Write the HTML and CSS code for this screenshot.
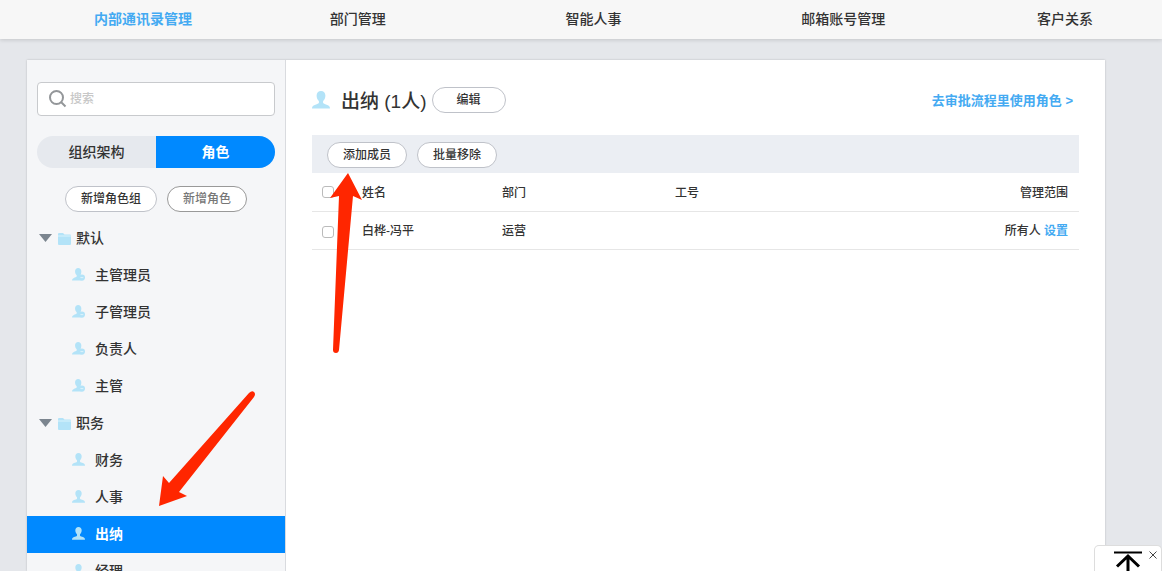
FILE: index.html
```
<!DOCTYPE html>
<html lang="zh-CN">
<head>
    <meta charset="UTF-8">
    <meta name="viewport" content="width=device-width, initial-scale=1">
    <title>内部通讯录管理</title>
    <link rel="stylesheet" href="styles.css">
</head>
<body>
    <!-- Shared icons -->
    <svg class="sprite" aria-hidden="true">
        <symbol id="user" viewBox="0 0 18 18">
            <path d="M9 0C6.300 0 4.600 1.900 4.600 4.600C4.600 7 5.500 9 6.900 10V12C6.200 12.900 4.500 13.300 2.800 13.900C1 14.600 0 15.500 0 17.500H18C18 15.500 17 14.600 15.200 13.900C13.500 13.300 11.800 12.900 11.100 12V10C12.500 9 13.400 7 13.400 4.600C13.400 1.900 11.700 0 9 0Z"/>
        </symbol>
        <symbol id="admin" viewBox="0 0 18 18">
            <path d="M8.500 0C6 0 4.200 1.800 4.200 4.500C4.200 7 5.200 9 6.500 10V11.800C5.500 12.800 4.200 13 2.600 13.800C1 14.500 0 15.500 0 17.300H12V9.400C12.600 8.300 12.900 6.500 12.900 4.500C12.900 1.800 11 0 8.500 0Z"/>
            <circle cx="13.700" cy="13.300" r="4.300"/>
            <path d="M11.700 13.300H15.700" stroke="#e3f4fb" stroke-width="1.200"/>
        </symbol>
        <symbol id="folder" viewBox="0 0 13 12">
            <path d="M0 1Q0 0 1 0H5L6.500 1.500H12Q13 1.500 13 2.500V11Q13 12 12 12H1Q0 12 0 11Z"/>
            <path d="M0 3H13" stroke="#d9f3fc" stroke-width="1"/>
        </symbol>
    </svg>

    <nav class="topnav">
        <a class="active" href="#">内部通讯录管理</a>
        <a href="#">部门管理</a>
        <a href="#">智能人事</a>
        <a href="#">邮箱账号管理</a>
        <a href="#">客户关系</a>
    </nav>

    <div class="panel">
        <aside class="sidebar">
            <label class="search">
                <svg viewBox="0 0 18 18" aria-hidden="true"><circle cx="7.500" cy="7.500" r="6.500"/><path d="M12 12L16.500 16.500"/></svg>
                <input type="text" placeholder="搜索" aria-label="搜索">
            </label>
            <div class="tabs">
                <button type="button">组织架构</button>
                <button type="button" class="active">角色</button>
            </div>
            <div class="role-actions">
                <button type="button" class="btn">新增角色组</button>
                <button type="button" class="btn btn-muted">新增角色</button>
            </div>

            <!-- Role tree -->
            <ul class="tree">
                <li class="group"><svg class="caret" viewBox="0 0 13 8"><path d="M0 0H13L6.500 8Z"/></svg><svg class="folder"><use href="#folder"/></svg>默认</li>
                <li><a href="#"><svg><use href="#admin"/></svg>主管理员</a></li>
                <li><a href="#"><svg><use href="#admin"/></svg>子管理员</a></li>
                <li><a href="#"><svg><use href="#admin"/></svg>负责人</a></li>
                <li><a href="#"><svg><use href="#admin"/></svg>主管</a></li>
                <li class="group"><svg class="caret" viewBox="0 0 13 8"><path d="M0 0H13L6.500 8Z"/></svg><svg class="folder"><use href="#folder"/></svg>职务</li>
                <li><a href="#"><svg><use href="#user"/></svg>财务</a></li>
                <li><a href="#"><svg><use href="#user"/></svg>人事</a></li>
                <li><a class="active" href="#"><svg><use href="#user"/></svg>出纳</a></li>
                <li><a href="#"><svg><use href="#user"/></svg>经理</a></li>
            </ul>
        </aside>

        <main class="content">
            <header class="title-row">
                <svg><use href="#user"/></svg>
                <h1>出纳 (1人)</h1>
                <button type="button" class="btn btn-edit">编辑</button>
                <a href="#">去审批流程里使用角色 &gt;</a>
            </header>
            <div class="toolbar">
                <button type="button" class="btn">添加成员</button>
                <button type="button" class="btn">批量移除</button>
            </div>
            <table class="members">
                <thead>
                    <tr>
                        <th class="check"><input type="checkbox" aria-label="全选"></th>
                        <th class="name">姓名</th>
                        <th class="dept">部门</th>
                        <th>工号</th>
                        <th class="scope">管理范围</th>
                    </tr>
                </thead>
                <tbody>
                    <tr>
                        <td class="check"><input type="checkbox" aria-label="白桦-冯平"></td>
                        <td>白桦-冯平</td>
                        <td>运营</td>
                        <td></td>
                        <td class="scope">所有人 <a href="#">设置</a></td>
                    </tr>
                </tbody>
            </table>
        </main>
    </div>

    <!-- Red pointer arrows -->
    <svg class="arrow arrow-add" viewBox="0 0 32 181" aria-hidden="true">
        <path d="M18 0L32 27L23 23L9 177Q8.500 180 6 180Q3 180 3 177L9 23L0 25Z"/>
    </svg>
    <svg class="arrow arrow-role" viewBox="0 0 98 116" aria-hidden="true">
        <path d="M0 115L4 85L10 92L90 2Q93 -1 95 1Q97 3 95 6L20 101L28 105Z"/>
    </svg>

    <!-- Back to top -->
    <div class="backtop">
        <button type="button" class="go-top" aria-label="返回顶部">
            <svg viewBox="0 0 28 24"><path d="M0 1.500H28"/><path class="head" d="M14 24V5M3 15.500L14 5L25 15.500"/></svg>
        </button>
        <button type="button" class="close" aria-label="关闭">
            <svg viewBox="0 0 8 8"><path d="M0.500 0.500L7.500 7.500M7.500 0.500L0.500 7.500"/></svg>
        </button>
    </div>
</body>
</html>
```
FILE: styles.css
```
* {
    box-sizing: border-box;
}
body {
    margin: 0;
    height: 100vh;
    display: flex;
    flex-direction: column;
    overflow: hidden;
    font-family: "Liberation Sans", "Noto Sans CJK SC", sans-serif;
    font-size: 12px;
    font-weight: 500;
    color: #333;
    background-color: #e5e7eb;
}
button, input {
    font: inherit;
    color: inherit;
}
button {
    padding: 0;
    border: none;
    background: none;
    cursor: pointer;
}
a {
    color: #44aaf2;
    text-decoration: none;
}
.sprite {
    display: none;
}

/* Top navigation */
.topnav {
    display: grid;
    grid-template-columns: repeat(4, 1fr) 125px;
    flex: none;
    padding-left: 94px;
    line-height: 39px;
    font-size: 14px;
    background-color: #f7f7f7;
    box-shadow: 0 1px 4px rgba(0,0,0,0.15);
}
.topnav a {
    color: #333;
}
.topnav .active {
    color: #44aaf2;
    font-weight: bold;
}

.panel {
    display: flex;
    flex: 1;
    min-height: 0;
    margin: 21px 57px 0 27px;
    background-color: #fff;
    box-shadow: 0 0 2px rgba(0,0,0,0.2);
}

/* Sidebar */
.sidebar {
    flex: none;
    width: 259px;
    padding-top: 22px;
    overflow: hidden;
    background-color: #f5f6f8;
    border-right: 1px solid #d9dbdf;
}
.search {
    display: flex;
    align-items: center;
    gap: 3px;
    height: 34px;
    margin: 0 10px;
    padding: 0 11px;
    background-color: #fff;
    border: 1px solid #c8cacd;
    border-radius: 4px;
}
.search svg {
    flex: none;
    width: 18px;
    height: 18px;
    fill: none;
    stroke: #939699;
    stroke-width: 2;
}
.search input {
    flex: 1;
    min-width: 0;
    padding: 0;
    border: none;
    outline: none;
}
.search input::placeholder {
    color: #c8c8c8;
}
.tabs {
    display: flex;
    height: 32px;
    margin: 20px 10px 18px;
    border-radius: 16px;
    overflow: hidden;
    background-color: #e6e9ee;
}
.tabs button {
    flex: 1;
    padding-bottom: 2px;
    font-size: 14px;
}
.tabs .active {
    color: #fff;
    font-weight: bold;
    background-color: #0089ff;
}
.role-actions {
    display: flex;
    justify-content: center;
    gap: 10px;
    margin-bottom: 8px;
}
.btn {
    height: 26px;
    padding: 0 15px;
    line-height: 24px;
    background-color: #fff;
    border: 1px solid #bfc2c9;
    border-radius: 13px;
}
.btn-muted {
    color: #777;
    border-color: #999;
}

.tree {
    margin: 0;
    padding: 0;
    list-style: none;
    font-size: 14px;
    line-height: 37px;
}
.tree a, .group {
    display: flex;
    align-items: center;
    height: 37px;
}
.tree a {
    gap: 10px;
    padding-left: 45px;
    color: #333;
}
.tree svg {
    flex: none;
    width: 13px;
    height: 13px;
    fill: #b3e3f8;
}
.tree a svg {
    margin-bottom: 2px;
}
.group {
    gap: 5px;
    padding-left: 12px;
}
.tree .caret {
    height: 8px;
    margin-right: 1px;
    margin-bottom: 2px;
    fill: #7b858f;
}
.tree .folder {
    height: 12px;
}
.tree .active {
    color: #fff;
    font-weight: bold;
    background-color: #0089ff;
}

/* Role members */
.content {
    flex: 1;
    min-width: 0;
    padding: 24px 26px 0;
}
.title-row {
    display: flex;
    align-items: center;
    height: 32px;
    margin-bottom: 19px;
}
.title-row svg {
    width: 18px;
    height: 18px;
    fill: #b3e3f8;
}
.title-row h1 {
    margin: 0 5px 0 11px;
    padding-bottom: 2px;
    font-size: 19px;
    font-weight: 500;
}
.title-row a {
    margin-left: auto;
    padding: 0 6px 2px 0;
    font-size: 13px;
    font-weight: bold;
}
.btn-edit {
    padding: 0 24px;
}
.toolbar {
    display: flex;
    align-items: center;
    gap: 10px;
    height: 38px;
    padding: 2px 15px 0;
    background-color: #ebeef3;
}
.members {
    width: 100%;
    table-layout: fixed;
    border-collapse: collapse;
}
.members th, .members td {
    height: 38px;
    padding: 0;
    text-align: left;
    font-weight: 500;
    border-bottom: 1px solid #e6e6e6;
}
.members td {
    padding-bottom: 2px;
}
.members .check {
    width: 50px;
    padding-left: 10px;
}
.members td.check {
    padding-top: 3px;
    padding-bottom: 0;
}
.members .name {
    width: 140px;
}
.members .dept {
    width: 173px;
}
.members .scope {
    padding-right: 11px;
    text-align: right;
}
.members a {
    font-weight: bold;
}
.members input {
    display: block;
    appearance: none;
    width: 12px;
    height: 12px;
    margin: 0;
    border: 1px solid #bbb;
    border-radius: 3px;
    background-color: #fff;
}

/* Arrows lie over the page */
.arrow {
    position: absolute;
    overflow: visible;
    fill: #ff2600;
}
.arrow-add {
    left: 330px;
    top: 173px;
    width: 32px;
    height: 181px;
}
.arrow-role {
    left: 159px;
    top: 391px;
    width: 98px;
    height: 116px;
}

.backtop {
    position: fixed;
    right: 0;
    bottom: 0;
    display: flex;
    align-items: flex-start;
    gap: 7px;
    height: 26px;
    padding: 5px 4px 0 19px;
    overflow: hidden;
    background-color: #fff;
    border: 1px solid #ddd;
    border-bottom: none;
    border-radius: 5px 5px 0 0;
}
.backtop svg {
    display: block;
    fill: none;
    stroke: #000;
}
.go-top svg {
    width: 28px;
    height: 24px;
    stroke-width: 2;
}
.go-top .head {
    stroke-width: 3;
}
.close svg {
    width: 8px;
    height: 8px;
    stroke: #444;
}
```
